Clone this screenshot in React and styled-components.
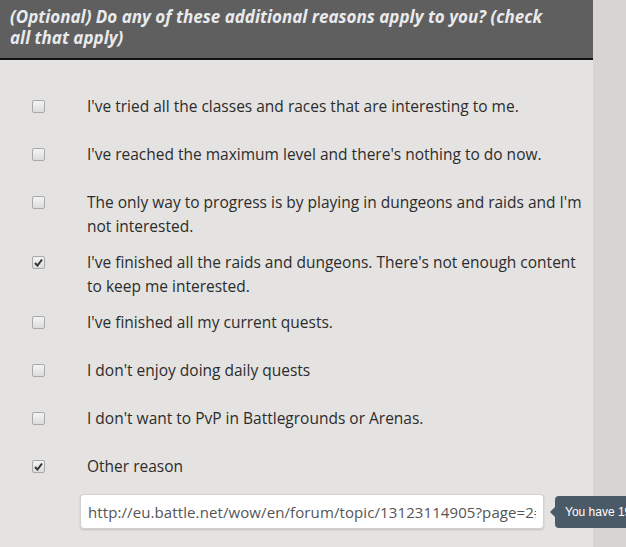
import { createGlobalStyle, styled } from 'styled-components';

const GlobalStyle = createGlobalStyle`
    html, body {
        margin: 0;
        padding: 0;
        overflow: hidden;
        background-color: #d6d5d2;
    }
`;

const Page = styled.div`
    width: 593px;
    min-height: 547px;
    background-color: #e4e3e1;
    font-family: "Open Sans", "DejaVu Sans", sans-serif;
`;

const Header = styled.header`
    background-color: #5f5f5f;
    border-bottom: 2px solid #111;
    height: 60px;
    box-sizing: border-box;
    padding: 6px 10px 0;
`;

const Title = styled.h2`
    margin: 0;
    max-width: 556px;
    font-size: 17px;
    line-height: 21px;
    font-weight: 700;
    font-style: italic;
    color: #e9eaec;
`;

const ReasonList = styled.ul`
    list-style: none;
    margin: 0;
    padding: 34px 0 0 32px;
    display: flex;
    flex-direction: column;
    gap: 12px;
`;

const Reason = styled.li`
    display: flex;
    align-items: flex-start;
    min-height: 36px;
`;

const Box = styled.span`
    flex: none;
    width: 11px;
    height: 11px;
    margin-top: 6px;
    margin-right: 42px;
    border: 1px solid #a9a9a9;
    border-radius: 2px;
    background: linear-gradient(#f4f4f4, #dcdcdc);
    display: flex;
    align-items: center;
    justify-content: center;
`;

const Label = styled.span`
    font-size: 15.5px;
    line-height: 24px;
    color: #2c2c2c;
`;

const OtherField = styled.div`
    position: relative;
    margin: -8px 0 0 48px;
    width: 464px;
`;

const UrlInput = styled.input`
    width: 100%;
    height: 35px;
    box-sizing: border-box;
    padding: 0 7px;
    border: 1px solid #d2d2d2;
    border-radius: 4px;
    background-color: #fff;
    box-shadow: 0 1px 2px rgba(0, 0, 0, 0.15);
    font-family: "Open Sans", "DejaVu Sans", sans-serif;
    font-size: 15px;
    letter-spacing: 0.1px;
    color: #555;
    outline: none;
`;

const Tip = styled.div`
    position: absolute;
    left: 475px;
    top: 2px;
    height: 32px;
    padding: 0 10px;
    display: flex;
    align-items: center;
    white-space: nowrap;
    background-color: #4b5a67;
    border-radius: 4px;
    color: #fff;
    font-family: "Liberation Sans", Arial, sans-serif;
    font-size: 12px;

    &::before {
        content: '';
        position: absolute;
        left: -5px;
        top: 11px;
        border-top: 5px solid transparent;
        border-bottom: 5px solid transparent;
        border-right: 5px solid #4b5a67;
    }
`;

const Check = () => (
    <svg width="9" height="9" viewBox="0 0 9 9">
        <path d="M1 5 L3.5 7.5 L8 1.5" fill="none" stroke="#333" strokeWidth="2" />
    </svg>
);

const reasons = [
    { text: "I've tried all the classes and races that are interesting to me." },
    { text: "I've reached the maximum level and there's nothing to do now." },
    { text: "The only way to progress is by playing in dungeons and raids and I'm not interested." },
    { text: "I've finished all the raids and dungeons. There's not enough content to keep me interested.", checked: true },
    { text: "I've finished all my current quests." },
    { text: "I don't enjoy doing daily quests" },
    { text: "I don't want to PvP in Battlegrounds or Arenas." },
    { text: "Other reason", checked: true },
];

export default function App() {
    return (
        <>
            <GlobalStyle />
            <Page>
                <Header>
                    <Title>(Optional) Do any of these additional reasons apply to you? (check all that apply)</Title>
                </Header>
                <ReasonList>
                    {reasons.map((r) => (
                        <Reason key={r.text}>
                            <Box>{r.checked && <Check />}</Box>
                            <Label>{r.text}</Label>
                        </Reason>
                    ))}
                    <OtherField>
                        <UrlInput readOnly value="http://eu.battle.net/wow/en/forum/topic/13123114905?page=2#15" />
                        <Tip>You have 1940 characters remaining</Tip>
                    </OtherField>
                </ReasonList>
            </Page>
        </>
    );
}
